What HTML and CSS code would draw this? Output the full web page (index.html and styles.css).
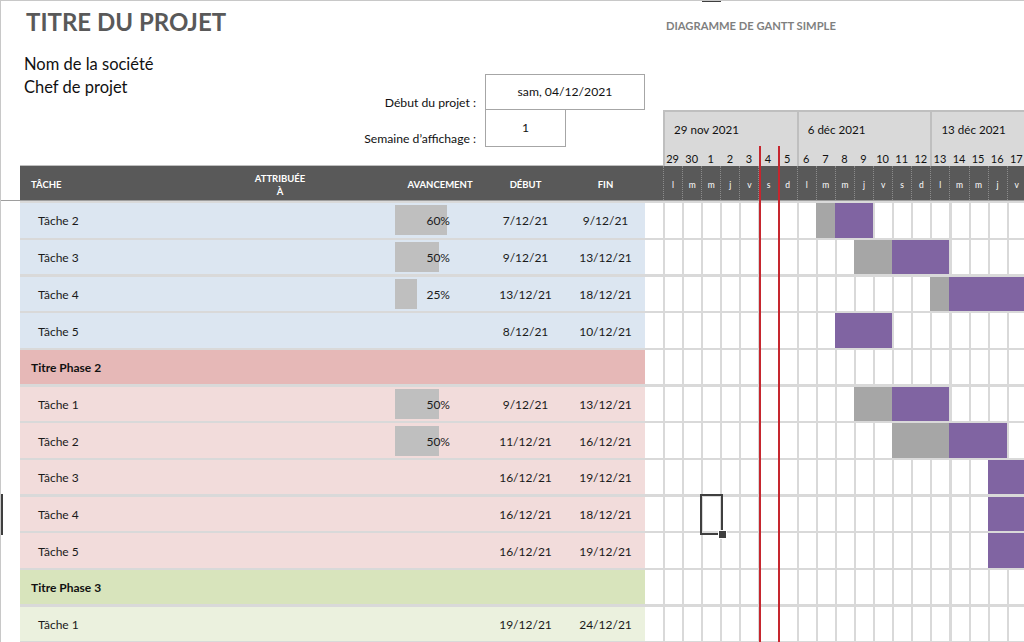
FILE: index.html
```html
<!DOCTYPE html>
<html lang="fr">
<head>
<meta charset="utf-8">
<title>Diagramme de Gantt simple</title>
<link rel="stylesheet" href="styles.css">
</head>
<body>
<div class="sheet">
  <div class="top">
    <div class="project">
      <div class="info">
        <h1 class="title">TITRE DU PROJET</h1>
        <p class="meta">Nom de la société</p>
        <p class="meta">Chef de projet</p>
      </div>
      <div class="label label-start">Début du projet :</div>
      <div class="box box-start">sam, 04/12/2021</div>
      <div class="label label-week">Semaine d’affichage :</div>
      <div class="box box-week">1</div>
    </div>
    <div class="chart-top">
      <div class="caption">DIAGRAMME DE GANTT SIMPLE</div>
      <div class="timeline">
        <div class="week">
          <div class="week-label">29 nov 2021</div>
          <div class="week-days"><span>29</span><span>30</span><span>1</span><span>2</span><span>3</span><span>4</span><span>5</span></div>
        </div>
        <div class="week">
          <div class="week-label">6 déc 2021</div>
          <div class="week-days"><span>6</span><span>7</span><span>8</span><span>9</span><span>10</span><span>11</span><span>12</span></div>
        </div>
        <div class="week">
          <div class="week-label">13 déc 2021</div>
          <div class="week-days"><span>13</span><span>14</span><span>15</span><span>16</span><span>17</span></div>
        </div>
      </div>
    </div>
  </div>

  <div class="head-row">
    <div class="cols">
      <div class="th th-task">TÂCHE</div>
      <div class="th th-c">ATTRIBUÉE<br>À</div>
      <div class="th"></div>
      <div class="th th-c">AVANCEMENT</div>
      <div class="th th-c">DÉBUT</div>
      <div class="th th-c">FIN</div>
    </div>
    <div class="spacer-dark"></div>
    <div class="letters">
      <span>l</span><span>m</span><span>m</span><span>j</span><span>v</span><span>s</span><span>d</span>
      <span>l</span><span>m</span><span>m</span><span>j</span><span>v</span><span>s</span><span>d</span>
      <span>l</span><span>m</span><span>m</span><span>j</span><span>v</span>
    </div>
  </div>
  <div class="freeze"></div>

  <div class="rows">
    <div class="row phase1">
      <div class="cols">
        <div class="td task">Tâche 2</div><div class="td"></div><div class="td"></div>
        <div class="td progress"><div class="bar" style="--p:60"></div><span class="pct">60%</span></div>
        <div class="td c">7/12/21</div><div class="td c">9/12/21</div>
      </div>
      <div class="spacer"></div>
      <div class="gantt"><div class="done" style="grid-column:9/10"></div><div class="todo" style="grid-column:10/12"></div></div>
    </div>

    <div class="row phase1">
      <div class="cols">
        <div class="td task">Tâche 3</div><div class="td"></div><div class="td"></div>
        <div class="td progress"><div class="bar" style="--p:50"></div><span class="pct">50%</span></div>
        <div class="td c">9/12/21</div><div class="td c">13/12/21</div>
      </div>
      <div class="spacer"></div>
      <div class="gantt"><div class="done" style="grid-column:11/13"></div><div class="todo" style="grid-column:13/16"></div></div>
    </div>

    <div class="row phase1">
      <div class="cols">
        <div class="td task">Tâche 4</div><div class="td"></div><div class="td"></div>
        <div class="td progress"><div class="bar" style="--p:25"></div><span class="pct">25%</span></div>
        <div class="td c">13/12/21</div><div class="td c">18/12/21</div>
      </div>
      <div class="spacer"></div>
      <div class="gantt"><div class="done" style="grid-column:15/16"></div><div class="todo" style="grid-column:16/21"></div></div>
    </div>

    <div class="row phase1">
      <div class="cols">
        <div class="td task">Tâche 5</div><div class="td"></div><div class="td"></div>
        <div class="td progress"></div>
        <div class="td c">8/12/21</div><div class="td c">10/12/21</div>
      </div>
      <div class="spacer"></div>
      <div class="gantt"><div class="todo" style="grid-column:10/13"></div></div>
    </div>

    <div class="row phase2-head">
      <div class="cols">
        <div class="td phase-title">Titre Phase 2</div>
      </div>
      <div class="spacer"></div>
      <div class="gantt"></div>
    </div>

    <div class="row phase2">
      <div class="cols">
        <div class="td task">Tâche 1</div><div class="td"></div><div class="td"></div>
        <div class="td progress"><div class="bar" style="--p:50"></div><span class="pct">50%</span></div>
        <div class="td c">9/12/21</div><div class="td c">13/12/21</div>
      </div>
      <div class="spacer"></div>
      <div class="gantt"><div class="done" style="grid-column:11/13"></div><div class="todo" style="grid-column:13/16"></div></div>
    </div>

    <div class="row phase2">
      <div class="cols">
        <div class="td task">Tâche 2</div><div class="td"></div><div class="td"></div>
        <div class="td progress"><div class="bar" style="--p:50"></div><span class="pct">50%</span></div>
        <div class="td c">11/12/21</div><div class="td c">16/12/21</div>
      </div>
      <div class="spacer"></div>
      <div class="gantt"><div class="done" style="grid-column:13/16"></div><div class="todo" style="grid-column:16/19"></div></div>
    </div>

    <div class="row phase2">
      <div class="cols">
        <div class="td task">Tâche 3</div><div class="td"></div><div class="td"></div>
        <div class="td progress"></div>
        <div class="td c">16/12/21</div><div class="td c">19/12/21</div>
      </div>
      <div class="spacer"></div>
      <div class="gantt"><div class="todo" style="grid-column:18/22"></div></div>
    </div>

    <div class="row phase2">
      <div class="cols">
        <div class="td task">Tâche 4</div><div class="td"></div><div class="td"></div>
        <div class="td progress"></div>
        <div class="td c">16/12/21</div><div class="td c">18/12/21</div>
      </div>
      <div class="spacer"></div>
      <div class="gantt"><div class="todo" style="grid-column:18/21"></div></div>
    </div>

    <div class="row phase2">
      <div class="cols">
        <div class="td task">Tâche 5</div><div class="td"></div><div class="td"></div>
        <div class="td progress"></div>
        <div class="td c">16/12/21</div><div class="td c">19/12/21</div>
      </div>
      <div class="spacer"></div>
      <div class="gantt"><div class="todo" style="grid-column:18/22"></div></div>
    </div>

    <div class="row phase3-head">
      <div class="cols">
        <div class="td phase-title">Titre Phase 3</div>
      </div>
      <div class="spacer"></div>
      <div class="gantt"></div>
    </div>

    <div class="row phase3">
      <div class="cols">
        <div class="td task">Tâche 1</div><div class="td"></div><div class="td"></div>
        <div class="td progress"></div>
        <div class="td c">19/12/21</div><div class="td c">24/12/21</div>
      </div>
      <div class="spacer"></div>
      <div class="gantt"><div class="todo" style="grid-column:21/27"></div></div>
    </div>
  </div>

  <div class="today"></div>
  <div class="selection"></div>
  <div class="row-mark"></div>
  <div class="col-mark"></div>
</div>
</body>
</html>
```

FILE: styles.css
```css
* { box-sizing: border-box; margin: 0; padding: 0; }

html, body {
  width: 1024px;
  height: 642px;
  overflow: hidden;
  background: #fff;
}

body {
  font-family: Lato, "Liberation Sans", sans-serif;
  color: #1a1a1a;
}

.sheet {
  position: relative;
  width: 1024px;
  height: 642px;
  overflow: hidden;
  border-top: 1px solid #c8c8c8;
  border-left: 1px solid #c8c8c8;
}

/* ---------- top area ---------- */
.top {
  display: grid;
  grid-template-columns: 662px 1fr;
  height: 165px;
}

.project {
  display: grid;
  grid-template-columns: 1fr 81px 79px 18px;
  grid-template-rows: 73px 36px 37px 1fr;
  padding-left: 19px;
}

.info {
  grid-area: 1 / 1 / 4 / 2;
  padding-left: 6px;
}

.title {
  font-size: 24px;
  font-weight: 700;
  line-height: 1;
  color: #595959;
  margin-top: 9px;
  margin-bottom: 19px;
}

.meta {
  font-size: 16.5px;
  line-height: 23px;
  color: #111;
  margin-left: -2px;
}

.label {
  grid-column: 1;
  justify-self: end;
  align-self: end;
  padding-right: 9px;
  font-size: 12.2px;
  line-height: 14px;
  color: #111;
}

.label-start { grid-row: 2; padding-bottom: 0; }
.label-week { grid-row: 3; padding-bottom: 1px; }

.box {
  display: flex;
  align-items: center;
  justify-content: center;
  border: 1px solid #a6a6a6;
  font-size: 12.2px;
  color: #111;
  background: #fff;
}

.box-start { grid-area: 2 / 2 / 3 / 4; padding-bottom: 2px; }
.box-week { grid-area: 3 / 2 / 4 / 3; border-top: 0; padding-bottom: 2px; }

.chart-top {
  display: grid;
  grid-template-rows: 109px 56px;
}

.caption {
  padding-top: 18px;
  padding-left: 3px;
  font-size: 11.2px;
  font-weight: 700;
  color: #7f7f7f;
}

.timeline {
  display: flex;
  background: #d9d9d9;
  border-top: 2px solid #bfbfbf;
}

.week {
  flex: 0 0 133.7px;
  display: grid;
  grid-template-rows: 1fr 19px;
  box-shadow: inset 2px 0 #bfbfbf;
}

.week-label {
  align-self: center;
  padding-left: 11px;
  font-size: 11.6px;
  color: #111;
}

.week-days {
  display: grid;
  grid-template-columns: repeat(7, 19.1px);
  font-size: 11px;
  color: #111;
}

.week-days span {
  text-align: center;
  line-height: 19px;
  padding-top: 2px;
}

/* ---------- table header ---------- */
.head-row {
  display: grid;
  grid-template-columns: 625px 18px 1fr;
  height: 34px;
  margin-left: 19px;
  background: #595959;
  box-shadow: 0 -1px #bfbfbf;
}

.cols {
  display: grid;
  grid-template-columns: 218px 84px 73px 90px 81px 79px;
  align-items: center;
  height: 100%;
}

.head-row .cols { padding-top: 3px; }

.th {
  color: #fff;
  font-size: 9.5px;
  font-weight: 700;
  line-height: 13px;
}

.th-task { padding-left: 11px; }
.th-c { text-align: center; }

.spacer-dark { background: #595959; }

.letters {
  display: grid;
  grid-template-columns: repeat(19, 19.1px);
  overflow: hidden;
}

.letters span {
  display: flex;
  align-items: center;
  justify-content: center;
  padding-top: 3px;
  color: #fff;
  font-size: 8.5px;
  border-left: 1px dotted #8c8c8c;
}

.freeze {
  height: 1px;
  background: #9e9e9e;
}

/* ---------- rows ---------- */
.rows {
  display: grid;
  grid-auto-rows: 34.3px;
  row-gap: 2.4px;
  padding-top: 2.3px;
  margin-left: 19px;
  background: #d9d9d9;
  height: 460px;
}

.row {
  display: grid;
  grid-template-columns: 625px 18px 1fr;
}

.phase1 .cols { background: #dce6f1; }
.phase2-head .cols { background: #e6b8b7; }
.phase2 .cols { background: #f2dcdb; }
.phase3-head .cols { background: #d8e4bc; }
.phase3 .cols { background: #ebf1de; }

.td {
  font-size: 12px;
  color: #1a1a1a;
  padding-top: 1px;
}

.task { padding-left: 18px; }

.phase-title {
  padding-left: 11px;
  font-weight: 700;
  color: #111;
}

.c { text-align: center; }

.progress {
  display: grid;
  align-items: center;
  height: 100%;
  padding-top: 0;
}

.bar {
  grid-area: 1 / 1;
  width: calc(var(--p) * 0.87px);
  height: 30px;
  background: #bfbfbf;
}

.pct {
  grid-area: 1 / 1;
  justify-self: end;
  padding-right: 35px;
  padding-top: 1px;
}

.spacer { background: #fff; }

.gantt {
  display: grid;
  grid-template-columns: repeat(19, 19.1px);
  grid-auto-columns: 19.1px;
  grid-template-rows: 100%;
  overflow: hidden;
  background: repeating-linear-gradient(90deg, #d9d9d9 0, #d9d9d9 2px, #fff 2px, #fff 19.1px);
}

.done, .todo { grid-row: 1; }
.done { background: #a6a6a6; }
.todo { background: #8064a2; }

/* ---------- overlays ---------- */
.today {
  position: absolute;
  left: 757.5px;
  top: 145px;
  bottom: 0;
  width: 21.1px;
  border-left: 2px solid #c6262e;
  border-right: 2px solid #c6262e;
}

.selection {
  position: absolute;
  left: 699px;
  top: 493px;
  width: 23px;
  height: 41px;
  border: 2px solid #3f3f3f;
}

.selection::after {
  content: "";
  position: absolute;
  right: -5px;
  bottom: -5px;
  width: 7px;
  height: 7px;
  background: #3f3f3f;
  box-shadow: 0 0 0 1px #fff;
}

.row-mark {
  position: absolute;
  left: -1px;
  top: 493px;
  width: 3px;
  height: 41px;
  background: #3f3f3f;
}

.col-mark {
  position: absolute;
  left: 701px;
  top: -1px;
  width: 19px;
  height: 2px;
  background: #3f3f3f;
}
```
